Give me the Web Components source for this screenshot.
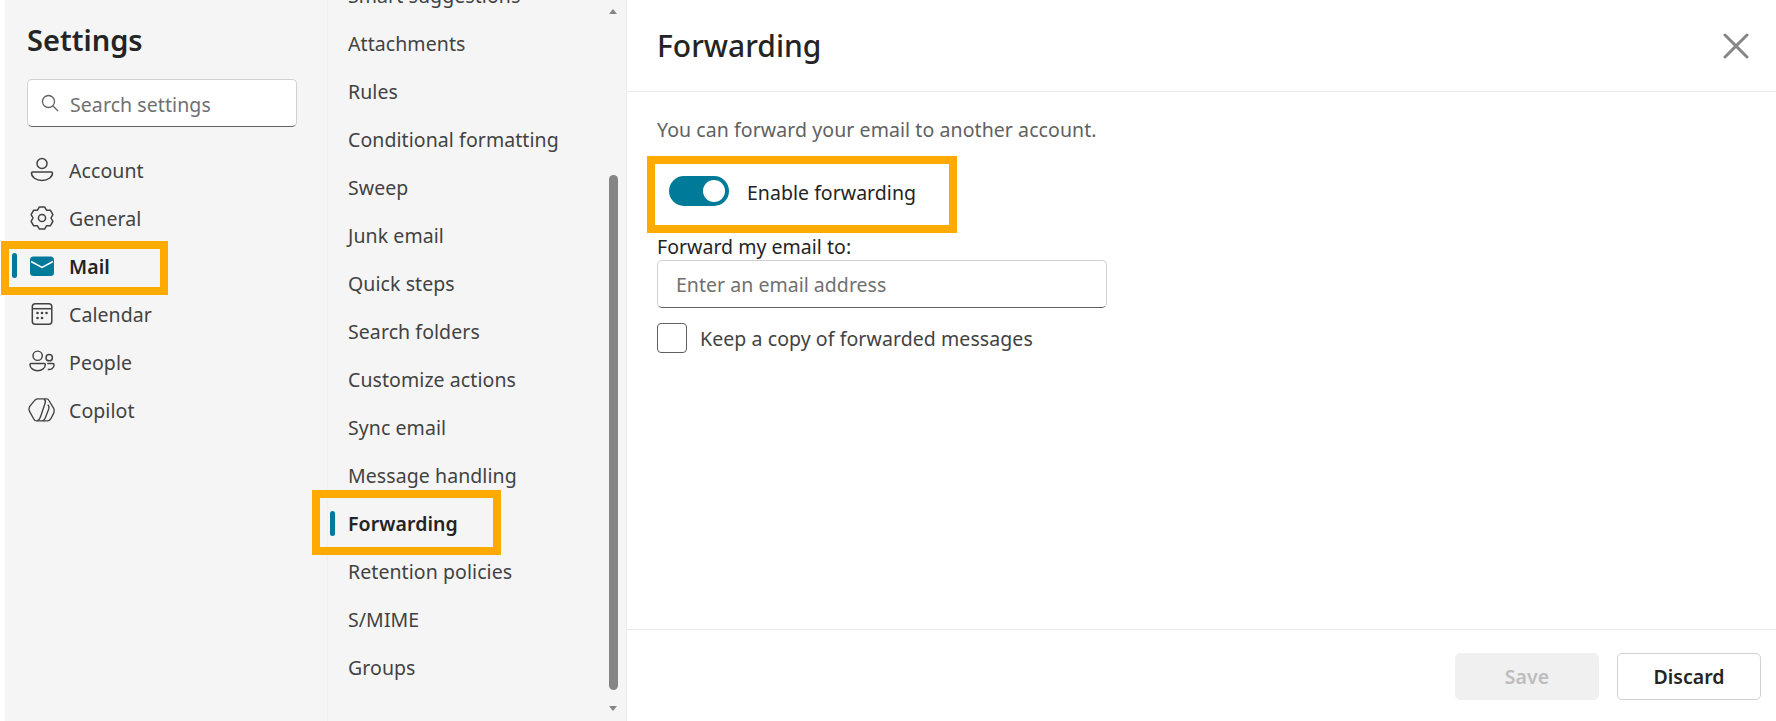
<!DOCTYPE html>
<html lang="en">
<head>
<meta charset="utf-8">
<title>Settings</title>
<style>
  html, body { margin: 0; height: 100%; overflow: hidden; background: #fff; }
  body { font-family: "Noto Sans", "Open Sans", sans-serif; color: #424242; }
  svg { display: block; }
</style>
</head>
<body>
<settings-app>
  <settings-nav slot="nav">
    <nav-item><svg slot="icon" width="26" height="26" viewBox="0 0 26 26" fill="none" stroke="#424242" stroke-width="1.5"><circle cx="13" cy="6.500" r="5"/><path d="M3.500 15h19c.6 0 1 .4 1 1 0 4-4.500 7.500-10.500 7.500S2.500 20 2.500 16c0-.6.4-1 1-1z"/></svg>Account</nav-item>
    <nav-item><svg slot="icon" width="26" height="26" viewBox="0 0 24 24" fill="none" stroke="#424242" stroke-width="1.4" stroke-linejoin="round"><path d="M9.640 1.770 14.360 1.770 16.150 4.810 19.680 4.840 22.040 8.930 20.300 12 22.040 15.070 19.680 19.160 16.150 19.190 14.360 22.230 9.640 22.230 7.850 19.190 4.320 19.160 1.960 15.070 3.700 12 1.960 8.930 4.320 4.840 7.850 4.810z"/><circle cx="12" cy="12" r="3.300"/></svg>General</nav-item>
    <nav-item active mark><svg slot="icon" width="26" height="26" viewBox="0 0 26 26"><rect x="1" y="3.500" width="24" height="19.500" rx="3.500" fill="#007a99"/><path d="M2 8.500 13 14.500 24 8.500" fill="none" stroke="#fff" stroke-width="1.500"/></svg>Mail</nav-item>
    <nav-item><svg slot="icon" width="26" height="26" viewBox="0 0 26 26" fill="#424242" stroke="none"><rect x="3.300" y="2.800" width="19.500" height="20.500" rx="3" fill="none" stroke="#424242" stroke-width="1.500"/><path d="M4 7.700h18" stroke="#424242" stroke-width="1.500"/><circle cx="13" cy="12" r="1.300"/><circle cx="17.500" cy="12" r="1.300"/><circle cx="8.500" cy="12" r="1.300"/><circle cx="8.500" cy="17" r="1.300"/><circle cx="13" cy="17" r="1.300"/></svg>Calendar</nav-item>
    <nav-item><svg slot="icon" width="28" height="26" viewBox="0 0 28 26" fill="none" stroke="#424242" stroke-width="1.500"><circle cx="10" cy="6.500" r="4.800"/><circle cx="22" cy="8.500" r="3.300"/><path d="M3 14.500h14c.6 0 1 .4 1 1 0 3.800-3.500 6.500-8 6.500s-8-2.700-8-6.500c0-.6.4-1 1-1z"/><path d="M20.500 20.800c3.500.3 6.500-1.400 6.500-4.800 0-1-.5-1.500-1.200-1.500H20"/></svg>People</nav-item>
    <nav-item><svg slot="icon" width="28" height="26" viewBox="0 0 28 26" fill="none" stroke="#424242" stroke-width="1.400" stroke-linejoin="round"><path d="M10 1.500h9c1.300 0 2.300.7 2.900 1.900L26.500 11c1 2 .8 4-.2 6l-2.800 5.300c-.8 1.300-1.900 2-3.300 2H9c-1.400 0-2.500-.8-3-2L1.600 14.500c-.9-2-.7-3.800.4-5.500L6.500 3.500C7.500 2.200 8.600 1.500 10 1.500z"/><path d="M16.500 1.700c1.500.8 1.800 2.500 1.300 4L13 20c-.6 2-1.500 3.500-3.500 4.300"/><path d="M20.500 7.500c1.500 1.300 1.500 3 1 4.500L18 21c-.5 1.500-1.500 2.700-3 3.300"/></svg>Copilot</nav-item>
  </settings-nav>
  <settings-list slot="list">
    <list-item>Smart suggestions</list-item>
    <list-item>Attachments</list-item>
    <list-item>Rules</list-item>
    <list-item>Conditional formatting</list-item>
    <list-item>Sweep</list-item>
    <list-item>Junk email</list-item>
    <list-item>Quick steps</list-item>
    <list-item>Search folders</list-item>
    <list-item>Customize actions</list-item>
    <list-item>Sync email</list-item>
    <list-item>Message handling</list-item>
    <list-item active mark>Forwarding</list-item>
    <list-item>Retention policies</list-item>
    <list-item>S/MIME</list-item>
    <list-item>Groups</list-item>
  </settings-list>
  <forwarding-pane slot="main"></forwarding-pane>
</settings-app>

<script>
// small helper so every element below is just a class with a template string
function shadow(el, html) {
  const root = el.attachShadow({ mode: 'open' });
  root.innerHTML = html;
  return root;
}

class SettingsApp extends HTMLElement {
  constructor() {
    super();
    shadow(this, `
      <style>
        :host { display: flex; height: 721px; padding-left: 5px; background: #fff; }
        .nav { flex: 0 0 322px; background: #f5f5f5; }
        .list { flex: 0 0 298px; background: #f5f5f5; border-left: 1px solid #f0f0f0; border-right: 1px solid #ececec; }
        .main { flex: 1; min-width: 0; }
      </style>
      <div class="nav"><slot name="nav"></slot></div>
      <div class="list"><slot name="list"></slot></div>
      <div class="main"><slot name="main"></slot></div>`);
  }
}

class SettingsNav extends HTMLElement {
  constructor() {
    super();
    shadow(this, `
      <style>
        :host { display: block; padding: 19px 30px 0 22px; }
        h1 { margin: 0; font: 600 29px/42px "Noto Sans", sans-serif; color: #242424; }
        .search { box-sizing: border-box; height: 48px; margin: 18px 0 19px; display: flex; align-items: center; gap: 10px;
          padding-left: 13px; background: #fff; border: 1px solid #d1d1d1; border-bottom-color: #616161; border-radius: 5px;
          font-size: 19.500px; color: #707070; letter-spacing: .08px; }
        .search svg { margin-right: 1px; }
        .search span { padding-top: 2px; }
      </style>
      <h1>Settings</h1>
      <div class="search">
        <svg width="18" height="18" viewBox="0 0 18 18" fill="none" stroke="#616161" stroke-width="1.300"><circle cx="7.500" cy="7.500" r="6"/><path d="M12 12l5 5"/></svg>
        <span>Search settings</span>
      </div>
      <slot></slot>`);
  }
}

const MARK_STYLE = `
  .mark { display: none; position: absolute; box-sizing: border-box; border: 8px solid #ffaa00; pointer-events: none; }
  .bar { display: none; position: absolute; width: 5px; height: 25px; border-radius: 3px; background: #007a99; }
  :host([mark]) .mark, :host([active]) .bar { display: block; }`;

class NavItem extends HTMLElement {
  constructor() {
    super();
    shadow(this, `
      <style>
        :host { display: flex; align-items: center; position: relative; height: 48px; gap: 14px; padding-left: 1px;
          font-size: 19.500px; letter-spacing: .08px; color: #424242; }
        :host([active]) { font-weight: 600; color: #242424; }
        .icon { flex: 0 0 27px; min-width: 0; display: flex; justify-content: center; }
        ${MARK_STYLE}
        .bar { left: -15px; top: 11px; }
        .mark { left: -26px; width: 167px; top: -1px; height: 54px; }
      </style>
      <span class="bar"></span>
      <span class="icon"><slot name="icon"></slot></span>
      <span><slot></slot></span>
      <span class="mark"></span>`);
  }
}

class SettingsList extends HTMLElement {
  constructor() {
    super();
    shadow(this, `
      <style>
        :host { display: flow-root; position: relative; height: 721px; overflow-x: visible; overflow-y: clip; }
        .rows { margin-top: -29px; padding-left: 20px; }
        .track { position: absolute; left: 281px; top: 9px; bottom: 10px; width: 9px; }
        .thumb { position: absolute; top: 166px; bottom: 21px; left: 0; right: 0; border-radius: 5px; background: #858585; }
        .up, .down { position: absolute; left: 0; width: 0; height: 0; border: 4.500px solid transparent; }
        .up { top: -4px; border-bottom: 5px solid #858585; }
        .down { bottom: -4px; border-top: 5px solid #858585; }
      </style>
      <div class="rows"><slot></slot></div>
      <div class="track"><span class="up"></span><span class="thumb"></span><span class="down"></span></div>`);
  }
}

class ListItem extends HTMLElement {
  constructor() {
    super();
    shadow(this, `
      <style>
        :host { display: flex; align-items: center; position: relative; height: 48px;
          font-size: 19.500px; letter-spacing: .08px; color: #424242; }
        :host([active]) { font-weight: 600; color: #242424; }
        ${MARK_STYLE}
        .bar { left: -18px; top: 12px; }
        .mark { left: -36px; width: 189px; top: -9px; height: 65px; }
      </style>
      <span class="bar"></span>
      <span><slot></slot></span>
      <span class="mark"></span>`);
  }
}

class ToggleSwitch extends HTMLElement {
  constructor() {
    super();
    shadow(this, `
      <style>
        :host { display: inline-flex; align-items: center; position: relative; gap: 18px; height: 30px; margin-left: 12px;
          font-size: 19.500px; letter-spacing: .03px; color: #242424; }
        .track { width: 60px; height: 30px; border-radius: 15px; background: #007a99; display: flex; align-items: center; justify-content: flex-end; }
        .knob { width: 22px; height: 22px; margin-right: 4px; border-radius: 50%; background: #fff; }
        .label { padding-top: 2px; }
        .mark { position: absolute; box-sizing: border-box; left: -22px; width: 310px; top: -20px; height: 77px; border: 8px solid #ffaa00; }
      </style>
      <span class="track"><span class="knob"></span></span>
      <span class="label"><slot></slot></span>
      <span class="mark"></span>`);
  }
}

class TextField extends HTMLElement {
  constructor() {
    super();
    shadow(this, `
      <style>
        :host { display: flex; align-items: center; box-sizing: border-box; width: 450px; height: 48px; padding: 1px 0 0 18px;
          background: #fff; border: 1px solid #d1d1d1; border-bottom-color: #616161; border-radius: 5px;
          font-size: 19.500px; letter-spacing: .03px; color: #707070; }
      </style>
      <slot></slot>`);
  }
}

class CheckBox extends HTMLElement {
  constructor() {
    super();
    shadow(this, `
      <style>
        :host { display: flex; align-items: center; gap: 13px; font-size: 19.500px; letter-spacing: .08px; color: #424242; }
        .box { box-sizing: border-box; width: 30px; height: 30px; border: 1px solid #616161; border-radius: 4px; background: #fff; }
        .label { padding-top: 1px; }
      </style>
      <span class="box"></span>
      <span class="label"><slot></slot></span>`);
  }
}

class ActionButton extends HTMLElement {
  constructor() {
    super();
    shadow(this, `
      <style>
        :host { display: flex; align-items: center; justify-content: center; box-sizing: border-box; width: 144px; height: 47px;
          border: 1px solid #d1d1d1; border-radius: 5px; background: #fff;
          font-size: 19.500px; font-weight: 600; letter-spacing: .03px; color: #242424; }
        :host([disabled]) { background: #f0f0f0; border-color: #f0f0f0; color: #bdbdbd; }
      </style>
      <slot></slot>`);
  }
}

class ForwardingPane extends HTMLElement {
  constructor() {
    super();
    shadow(this, `
      <style>
        :host { display: flex; flex-direction: column; height: 721px; }
        header { flex: 0 0 92px; box-sizing: border-box; display: flex; align-items: center; justify-content: space-between;
          padding: 0 27px 0 30px; border-bottom: 1px solid #ececec; }
        h2 { margin: 0; font: 500 30px/40px "Noto Sans", sans-serif; color: #242424; }
        .body { flex: 1; padding: 25px 30px 0; }
        p { margin: 0; font-size: 19.500px; line-height: 26px; letter-spacing: .08px; color: #616161; }
        .row { margin-top: 33px; height: 30px; }
        label { display: block; margin-top: 28px; font-size: 19.500px; line-height: 26px; letter-spacing: .03px; color: #242424; }
        check-box { margin-top: 15px; }
        footer { flex: 0 0 92px; box-sizing: border-box; display: flex; justify-content: flex-end; gap: 18px;
          padding: 23px 15px 0 0; border-top: 1px solid #ececec; }
      </style>
      <header>
        <h2>Forwarding</h2>
        <svg width="26" height="26" viewBox="0 0 26 26" stroke="#858585" stroke-width="3" stroke-linecap="round"><path d="M2 2l22 22M24 2L2 24"/></svg>
      </header>
      <div class="body">
        <p>You can forward your email to another account.</p>
        <div class="row"><toggle-switch>Enable forwarding</toggle-switch></div>
        <label>Forward my email to:</label>
        <text-field>Enter an email address</text-field>
        <check-box>Keep a copy of forwarded messages</check-box>
      </div>
      <footer>
        <action-button disabled>Save</action-button>
        <action-button>Discard</action-button>
      </footer>`);
  }
}

customElements.define('settings-app', SettingsApp);
customElements.define('settings-nav', SettingsNav);
customElements.define('nav-item', NavItem);
customElements.define('settings-list', SettingsList);
customElements.define('list-item', ListItem);
customElements.define('toggle-switch', ToggleSwitch);
customElements.define('text-field', TextField);
customElements.define('check-box', CheckBox);
customElements.define('action-button', ActionButton);
customElements.define('forwarding-pane', ForwardingPane);
</script>
</body>
</html>
